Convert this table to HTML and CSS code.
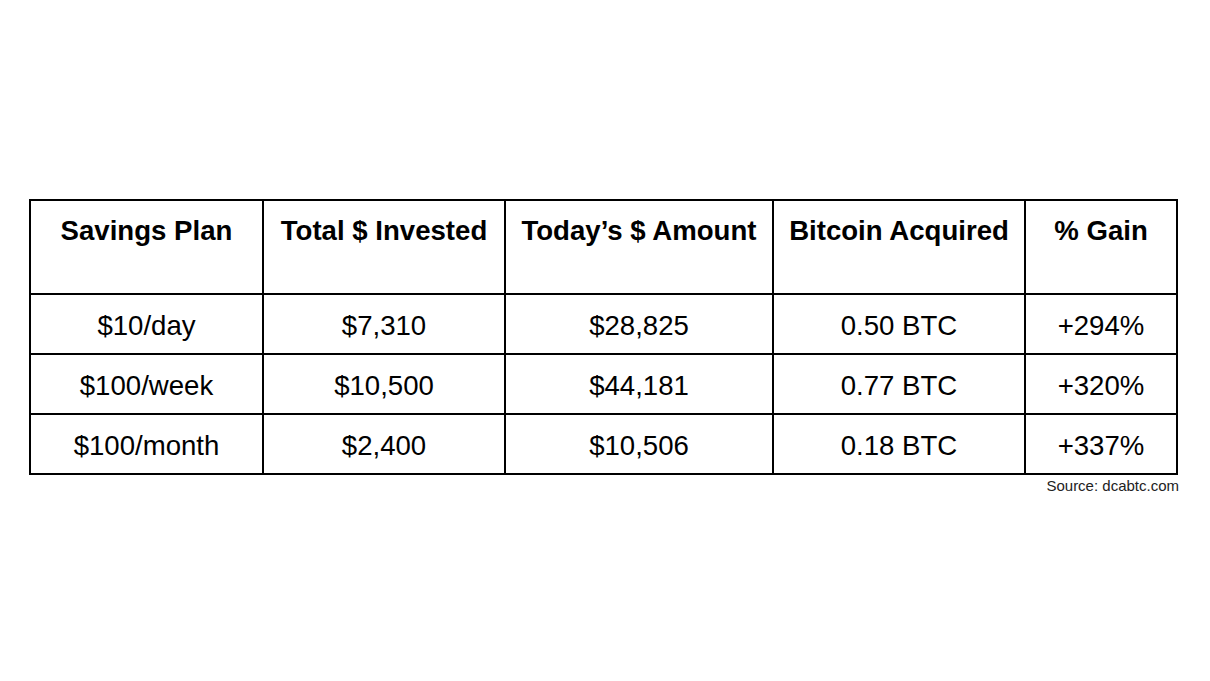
FILE: index.html
```html
<!DOCTYPE html>
<html lang="en">
<head>
<meta charset="utf-8">
<title>DCA Bitcoin Savings Plans</title>
<link rel="stylesheet" href="styles.css">
</head>
<body>
<main class="page">
  <table class="plans">
    <colgroup>
      <col class="c1"><col class="c2"><col class="c3"><col class="c4"><col class="c5">
    </colgroup>
    <thead>
      <tr>
        <th>Savings Plan</th>
        <th>Total $ Invested</th>
        <th>Today’s $ Amount</th>
        <th>Bitcoin Acquired</th>
        <th>% Gain</th>
      </tr>
    </thead>
    <tbody>
      <tr><td>$10/day</td><td>$7,310</td><td>$28,825</td><td>0.50 BTC</td><td>+294%</td></tr>
      <tr><td>$100/week</td><td>$10,500</td><td>$44,181</td><td>0.77 BTC</td><td>+320%</td></tr>
      <tr><td>$100/month</td><td>$2,400</td><td>$10,506</td><td>0.18 BTC</td><td>+337%</td></tr>
    </tbody>
  </table>
  <p class="source">Source: dcabtc.com</p>
</main>
</body>
</html>
```

FILE: styles.css
```css
html, body {
  margin: 0;
  padding: 0;
  background: #fff;
}
body {
  font-family: "Liberation Sans", Arial, sans-serif;
  color: #000;
  width: 1210px;
  height: 681px;
  overflow: hidden;
}
.page {
  padding: 199px 0 0 29px;
}
.plans {
  table-layout: fixed;
  width: 1149px;
  border-collapse: separate;
  border-spacing: 0;
  border-left: 2px solid #000;
  border-top: 2px solid #000;
}
.c1 { width: 233px; }
.c2 { width: 242px; }
.c3 { width: 268px; }
.c4 { width: 252px; }
.c5 { width: 152px; }
.plans th,
.plans td {
  border-right: 2px solid #000;
  border-bottom: 2px solid #000;
  text-align: center;
  font-size: 27.6px;
  line-height: 31px;
  padding: 0;
  white-space: nowrap;
}
.plans th {
  font-weight: bold;
  vertical-align: top;
  height: 94px;
  box-sizing: border-box;
  padding-top: 14px;
}
.plans td {
  font-weight: normal;
  vertical-align: top;
  height: 60px;
  box-sizing: border-box;
  padding-top: 15px;
}
.source {
  margin: 2px 0 0 0;
  width: 1150px;
  text-align: right;
  font-size: 15px;
  line-height: 17px;
  color: #222;
}
```
